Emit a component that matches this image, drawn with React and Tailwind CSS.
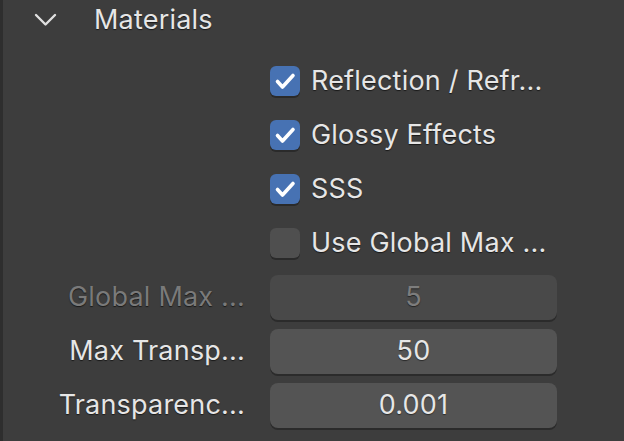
import React from 'react';

const font = { fontFamily: 'Inter, "Noto Sans", sans-serif' };

const Check = ({ checked, label }) => (
    <div className="h-[54px] flex items-center pl-[267px]">
        <div
            className={`w-[30px] h-[30px] rounded-[6px] flex items-center justify-center shadow-[0_2px_0_#2a2a2a] ${
                checked ? 'bg-[#4772b3]' : 'bg-[#4f4f4f]'
            }`}
        >
            {checked && (
                <svg width="30" height="30" viewBox="0 0 30 30">
                    <path d="M7.5 15.5 L12.5 21 L23 9.5" fill="none" stroke="#fff" strokeWidth="3.6" strokeLinecap="round" strokeLinejoin="round" />
                </svg>
            )}
        </div>
        <span className="ml-[11px] text-[27px] tracking-[0.2px] text-[#e6e6e6] [text-shadow:0_1px_1px_rgba(0,0,0,0.6)]">{label}</span>
    </div>
);

const Field = ({ label, value, disabled }) => (
    <div className="h-[54px] flex items-center">
        <div
            className={`w-[242px] text-right text-[27px] tracking-[0.2px] whitespace-nowrap [text-shadow:0_1px_1px_rgba(0,0,0,0.6)] ${
                disabled ? 'text-[#7a7a7a]' : 'text-[#e6e6e6]'
            }`}
        >
            {label}
        </div>
        <div
            className={`ml-[25px] w-[287px] h-[45px] rounded-[8px] flex items-center justify-center text-[27px] tracking-[0.2px] shadow-[0_2px_0_#2b2b2b] [text-shadow:0_1px_1px_rgba(0,0,0,0.5)] ${
                disabled ? 'bg-[#494949] text-[#7d7d7d]' : 'bg-[#545454] text-[#e6e6e6]'
            }`}
        >
            {value}
        </div>
    </div>
);

export default function App() {
    return (
        <div className="w-[624px] h-[441px] bg-[#3d3d3d] flex overflow-hidden" style={font}>
            <div className="w-[3px] h-full bg-[#2e2e2e]" />
            <div className="flex-1 flex flex-col">
                <div className="h-[40px] flex items-center">
                    <svg width="24" height="16" viewBox="0 0 24 16" className="ml-[30px]">
                        <path d="M3 3 L12.5 12.5 L22 3" fill="none" stroke="#e0e0e0" strokeWidth="2.4" strokeLinecap="round" strokeLinejoin="round" />
                    </svg>
                    <span className="ml-[37px] text-[27px] tracking-[0.2px] text-[#e6e6e6] [text-shadow:0_1px_1px_rgba(0,0,0,0.6)]">Materials</span>
                </div>
                <div className="mt-[14px] flex flex-col">
                    <Check checked label="Reflection / Refr..." />
                    <Check checked label="Glossy Effects" />
                    <Check checked label="SSS" />
                    <Check label="Use Global Max ..." />
                    <Field label="Global Max ..." value="5" disabled />
                    <Field label="Max Transp..." value="50" />
                    <Field label="Transparenc..." value="0.001" />
                </div>
            </div>
        </div>
    );
}
